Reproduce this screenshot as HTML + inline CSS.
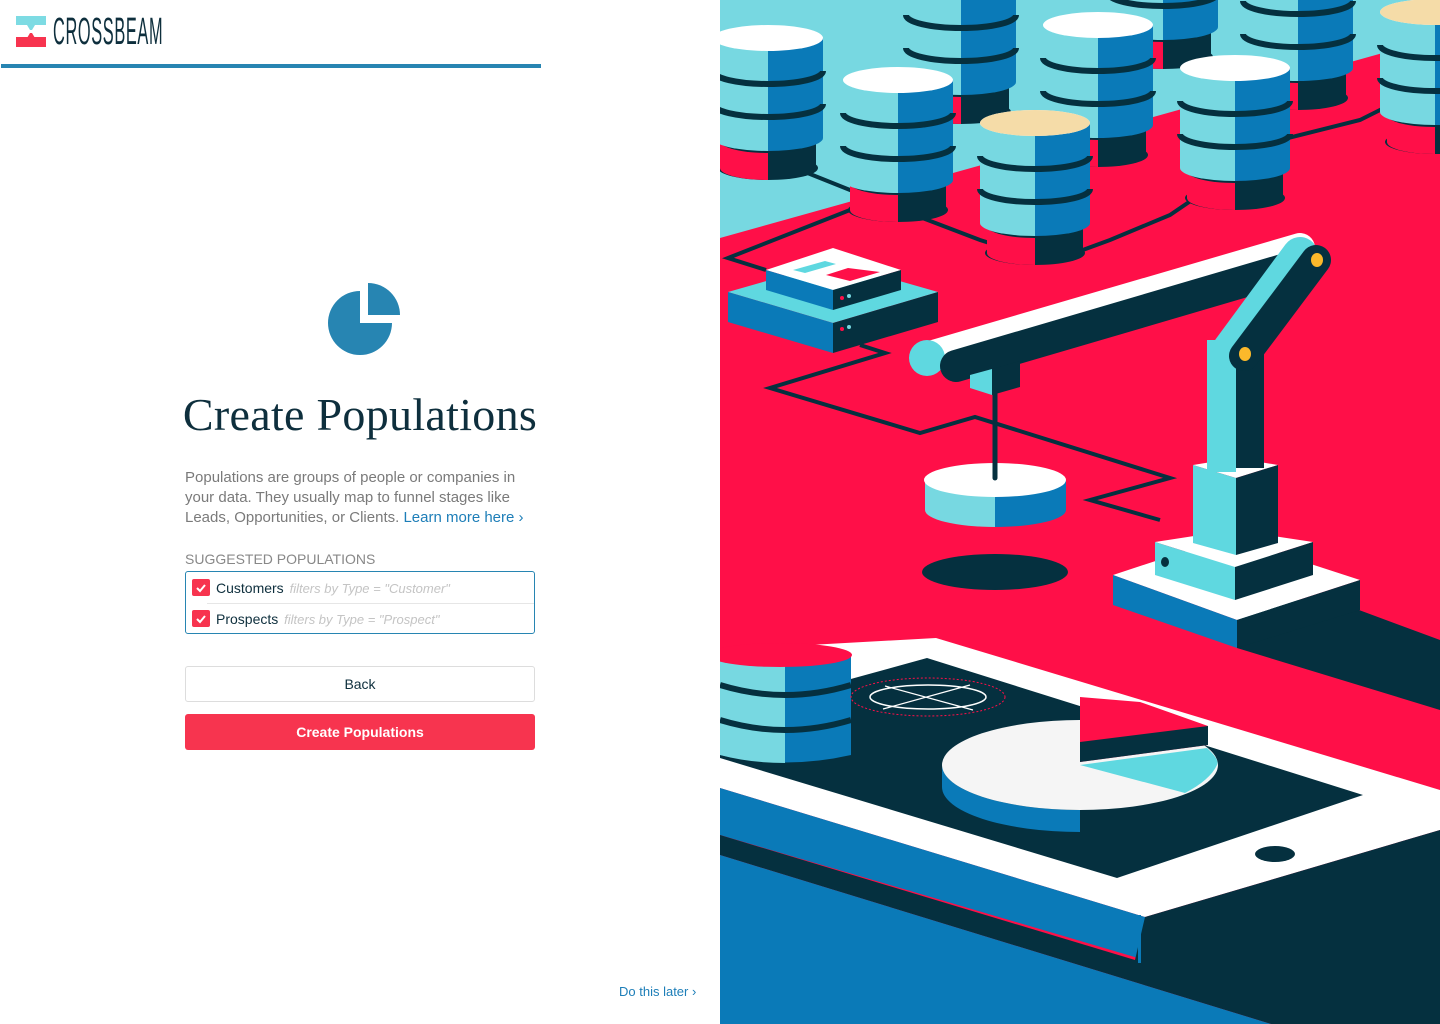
<!DOCTYPE html>
<html><head><meta charset="utf-8"><style>
*{margin:0;padding:0;box-sizing:border-box}
body{width:1440px;height:1024px;position:relative;overflow:hidden;background:#fff;font-family:"Liberation Sans",sans-serif}
.abs{position:absolute}
</style></head><body>
<div class="abs" style="left:16px;top:16px;width:30px;height:31px">
<svg width="30" height="31"><rect x="0" y="0" width="30" height="9" fill="#7ddbe3"/><polygon points="11,9 19,9 16,14 14,14" fill="#7ddbe3"/><polygon points="14,17 16,17 19,22 11,22" fill="#f7344f"/><rect x="0" y="21" width="30" height="10" fill="#f7344f"/></svg></div>
<div class="abs" style="left:53px;top:11px;font-size:38px;color:#0e2f3d;transform:scaleX(0.43);transform-origin:left top;letter-spacing:1.5px">CROSSBEAM</div>
<div class="abs" style="left:1px;top:64px;width:540px;height:4px;background:#2785b2"></div>
<svg class="abs" style="left:300px;top:270px" width="130" height="100">
<path d="M60 21 A32 32 0 1 0 92 53 L60 53 Z" fill="#2785b2"/>
<path d="M68 13 A32 32 0 0 1 100 45 L68 45 Z" fill="#2785b2"/></svg>
<div class="abs" style="left:170px;top:388px;width:380px;text-align:center;font-family:'Liberation Serif',serif;font-size:46px;color:#0e2f3d;letter-spacing:0.3px">Create Populations</div>
<div class="abs" style="left:185px;top:468px;width:350px;font-size:15px;line-height:20px;color:#7a7a7a">Populations are groups of people or companies in your data. They usually map to funnel stages like Leads, Opportunities, or Clients. <span style="color:#1d7eb8">Learn more here ›</span></div>
<div class="abs" style="left:185px;top:551px;font-size:14px;color:#888">SUGGESTED POPULATIONS</div>
<div class="abs" style="left:185px;top:571px;width:350px;height:63px;border:1px solid #2785b2;border-radius:3px">
<div class="abs" style="left:21px;top:31px;right:0;height:1px;background:#e6e6e6"></div>
<div class="abs" style="left:6px;top:7px;width:18px;height:17px;background:#f7344f;border-radius:2px"><svg width="18" height="17"><path d="M5 9 L8 12 L13 6" stroke="#fff" stroke-width="2" fill="none"/></svg></div>
<div class="abs" style="left:30px;top:8px;font-size:14px;color:#0e2f3d">Customers <i style="color:#c4c4c4;font-size:13px;margin-left:2px">filters by Type = "Customer"</i></div>
<div class="abs" style="left:6px;top:38px;width:18px;height:17px;background:#f7344f;border-radius:2px"><svg width="18" height="17"><path d="M5 9 L8 12 L13 6" stroke="#fff" stroke-width="2" fill="none"/></svg></div>
<div class="abs" style="left:30px;top:39px;font-size:14px;color:#0e2f3d">Prospects <i style="color:#c4c4c4;font-size:13px;margin-left:2px">filters by Type = "Prospect"</i></div>
</div>
<div class="abs" style="left:185px;top:666px;width:350px;height:36px;border:1px solid #ddd;border-radius:3px;text-align:center;line-height:34px;font-size:14px;color:#0e2f3d">Back</div>
<div class="abs" style="left:185px;top:714px;width:350px;height:36px;background:#f7344f;border-radius:3px;text-align:center;line-height:36px;font-size:14px;color:#fff;font-weight:bold">Create Populations</div>
<div class="abs" style="left:619px;top:984px;font-size:13px;color:#1d7eb8">Do this later ›</div>
<svg class="abs" style="left:720px;top:0" width="720" height="1024">
<defs>
<g id="cyl">
<ellipse cx="0" cy="130" rx="50" ry="12" fill="#05303f"/>
<rect x="-48" y="100" width="48" height="30" fill="#ff0f48"/>
<rect x="0" y="100" width="48" height="30" fill="#05303f"/>
<path d="M-48 130 A48 12 0 0 0 0 142 L0 130Z" fill="#ff0f48"/>
<ellipse cx="0" cy="103" rx="48" ry="12" fill="#05303f"/>
<rect x="-55" y="0" width="55" height="100" fill="#77d8e1"/>
<rect x="0" y="0" width="55" height="100" fill="#0a7ab8"/>
<path d="M-55 100 A55 13 0 0 0 0 113 L0 100Z" fill="#77d8e1"/>
<path d="M0 100 L0 113 A55 13 0 0 0 55 100Z" fill="#0a7ab8"/>
<path d="M-55 33 A55 13 0 0 0 55 33 M-55 66 A55 13 0 0 0 55 66" stroke="#05303f" stroke-width="6" fill="none"/>
<ellipse cx="0" cy="0" rx="55" ry="13" fill="#fff"/>
</g>
</defs>
<rect width="720" height="1024" fill="#77d8e1"/>
<polygon points="0,238 720,37 720,1024 0,1024" fill="#ff0f48"/>
<g stroke="#05303f" stroke-width="4" fill="none">
<polyline points="80,170 150,198 260,240 330,262 390,240 450,215 560,140 640,120 720,80"/>
<polyline points="130,210 8,258 46,270"/>
<polyline points="140,345 165,353 50,388 200,433 255,417 450,478 370,500 440,520"/>
</g>
<use href="#cyl" x="443" y="-73"/>
<use href="#cyl" x="241" y="-18"/>
<use href="#cyl" x="578" y="-32"/>
<use href="#cyl" x="48" y="38"/>
<use href="#cyl" x="378" y="25"/>
<use href="#cyl" x="715" y="12"/>
<ellipse cx="715" cy="12" rx="55" ry="13" fill="#f5dca8"/>
<use href="#cyl" x="178" y="80"/>
<use href="#cyl" x="515" y="68"/>
<use href="#cyl" x="315" y="123"/>
<ellipse cx="315" cy="123" rx="55" ry="13" fill="#f5dca8"/>
<!-- server -->
<polygon points="8,292 113,262 218,292 113,323" fill="#5fd8e0"/>
<polygon points="8,292 113,323 113,353 8,322" fill="#0a7ab8"/>
<polygon points="113,323 218,292 218,322 113,353" fill="#05303f"/>
<polygon points="46,270 113,248 181,270 113,290" fill="#fff"/>
<polygon points="46,270 113,290 113,310 46,290" fill="#0a7ab8"/>
<polygon points="113,290 181,270 181,290 113,310" fill="#05303f"/>
<polygon points="73,270 105,261 116,264 85,273" fill="#5fd8e0"/>
<polygon points="106,275 128,268 160,272 130,281" fill="#ff0f48"/>
<circle cx="122" cy="298" r="2" fill="#ff0f48"/><circle cx="129" cy="296" r="2" fill="#77d8e1"/>
<circle cx="122" cy="329" r="2" fill="#ff0f48"/><circle cx="129" cy="327" r="2" fill="#77d8e1"/>
<!-- right dark block -->
<polygon points="517,600 639,600 639,610 720,640 720,710 517,648" fill="#05303f"/>
<!-- platform -->
<polygon points="0,650 216,638 720,790 720,830 425,917 0,788" fill="#fff"/>
<polygon points="0,715 207,658 643,795 397,878 0,758" fill="#05303f"/>
<polygon points="0,788 425,917 425,960 0,835" fill="#0a7ab8"/>
<polygon points="0,835 415,960 425,917 720,830 720,1024 551,1024 0,855" fill="#05303f"/>
<polygon points="0,855 551,1024 0,1024" fill="#0a7ab8"/>
<rect x="418" y="915" width="3" height="48" fill="#0a7ab8"/>
<!-- left bottom cylinders -->
<rect x="0" y="655" width="65" height="100" fill="#77d8e1"/>
<rect x="65" y="655" width="66" height="100" fill="#0a7ab8"/>
<path d="M0 755 Q65 770 131 755 L131 740 L0 740Z" fill="#0a7ab8"/>
<path d="M0 740 L0 755 Q30 763 65 763 L65 740Z" fill="#77d8e1"/>
<path d="M0 685 Q65 705 131 685 M0 720 Q65 740 131 720" stroke="#05303f" stroke-width="6" fill="none"/>
<ellipse cx="60" cy="655" rx="72" ry="12" fill="#ff0f48"/>
<!-- target -->
<ellipse cx="208" cy="697" rx="77" ry="19" fill="none" stroke="#ff0f48" stroke-width="1" stroke-dasharray="2 2"/>
<ellipse cx="208" cy="697" rx="58" ry="12" fill="none" stroke="#fff" stroke-width="1.5"/>
<path d="M165 686 L253 710 M163 709 L250 685" stroke="#fff" stroke-width="1.2"/>
<!-- pie -->
<path d="M222 765 A138 45 0 0 0 360 810 L360 832 A138 45 0 0 1 222 787Z" fill="#0a7ab8"/>
<ellipse cx="360" cy="765" rx="138" ry="45" fill="#f5f5f5"/>
<polygon points="360,697 420,702 488,726 488,745 360,762" fill="#ff0f48"/>
<polygon points="360,742 488,726 488,745 360,762" fill="#05303f"/>
<path d="M360,765 L487,748 Q500,760 497,765 Q490,780 465,793Z" fill="#5fd8e0"/>
<ellipse cx="555" cy="854" rx="20" ry="8" fill="#05303f"/>
<!-- hanging disk -->
<ellipse cx="275" cy="572" rx="73" ry="18" fill="#05303f"/>
<rect x="205" y="480" width="70" height="30" fill="#77d8e1"/>
<rect x="275" y="480" width="71" height="30" fill="#0a7ab8"/>
<path d="M205 510 A70 17 0 0 0 275 527 L275 510Z" fill="#77d8e1"/>
<path d="M275 510 L275 527 A71 17 0 0 0 346 510Z" fill="#0a7ab8"/>
<ellipse cx="275" cy="480" rx="71" ry="17" fill="#fff"/>
<!-- robot base -->
<polygon points="393,575 475,548 517,540 640,580 517,620" fill="#fff"/>
<polygon points="393,575 517,620 517,648 393,605" fill="#0a7ab8"/>
<polygon points="517,620 640,580 640,610 517,648" fill="#05303f"/>
<polygon points="435,542 513,530 593,542 515,567" fill="#fff"/>
<polygon points="435,542 515,567 515,600 435,575" fill="#5fd8e0"/>
<polygon points="515,567 593,542 593,575 515,600" fill="#05303f"/>
<ellipse cx="445" cy="562" rx="4" ry="5" fill="#05303f"/>
<polygon points="473,465 516,458 558,465 516,478" fill="#fff"/>
<polygon points="473,465 516,478 516,555 473,543" fill="#5fd8e0"/>
<polygon points="516,478 558,465 558,543 516,555" fill="#05303f"/>
<rect x="487" y="340" width="29" height="132" fill="#5fd8e0"/>
<rect x="516" y="350" width="28" height="118" fill="#05303f"/>
<!-- beam -->
<line x1="210" y1="356" x2="580" y2="248" stroke="#fff" stroke-width="30" stroke-linecap="round"/>
<circle cx="207" cy="358" r="18" fill="#5fd8e0"/>
<line x1="236" y1="366" x2="590" y2="262" stroke="#05303f" stroke-width="32" stroke-linecap="round"/>
<polygon points="250,375 272,369 272,395 250,388" fill="#5fd8e0"/>
<polygon points="272,369 300,361 300,387 272,395" fill="#05303f"/>
<line x1="275" y1="390" x2="275" y2="478" stroke="#05303f" stroke-width="5" stroke-linecap="round"/>
<!-- upper arm -->
<line x1="510" y1="350" x2="580" y2="255" stroke="#5fd8e0" stroke-width="36" stroke-linecap="round"/>
<line x1="524" y1="356" x2="596" y2="260" stroke="#05303f" stroke-width="30" stroke-linecap="round"/>
<ellipse cx="525" cy="354" rx="6" ry="7" fill="#fbb92b"/>
<ellipse cx="597" cy="260" rx="6" ry="7" fill="#fbb92b"/>
</svg>
</body></html>
